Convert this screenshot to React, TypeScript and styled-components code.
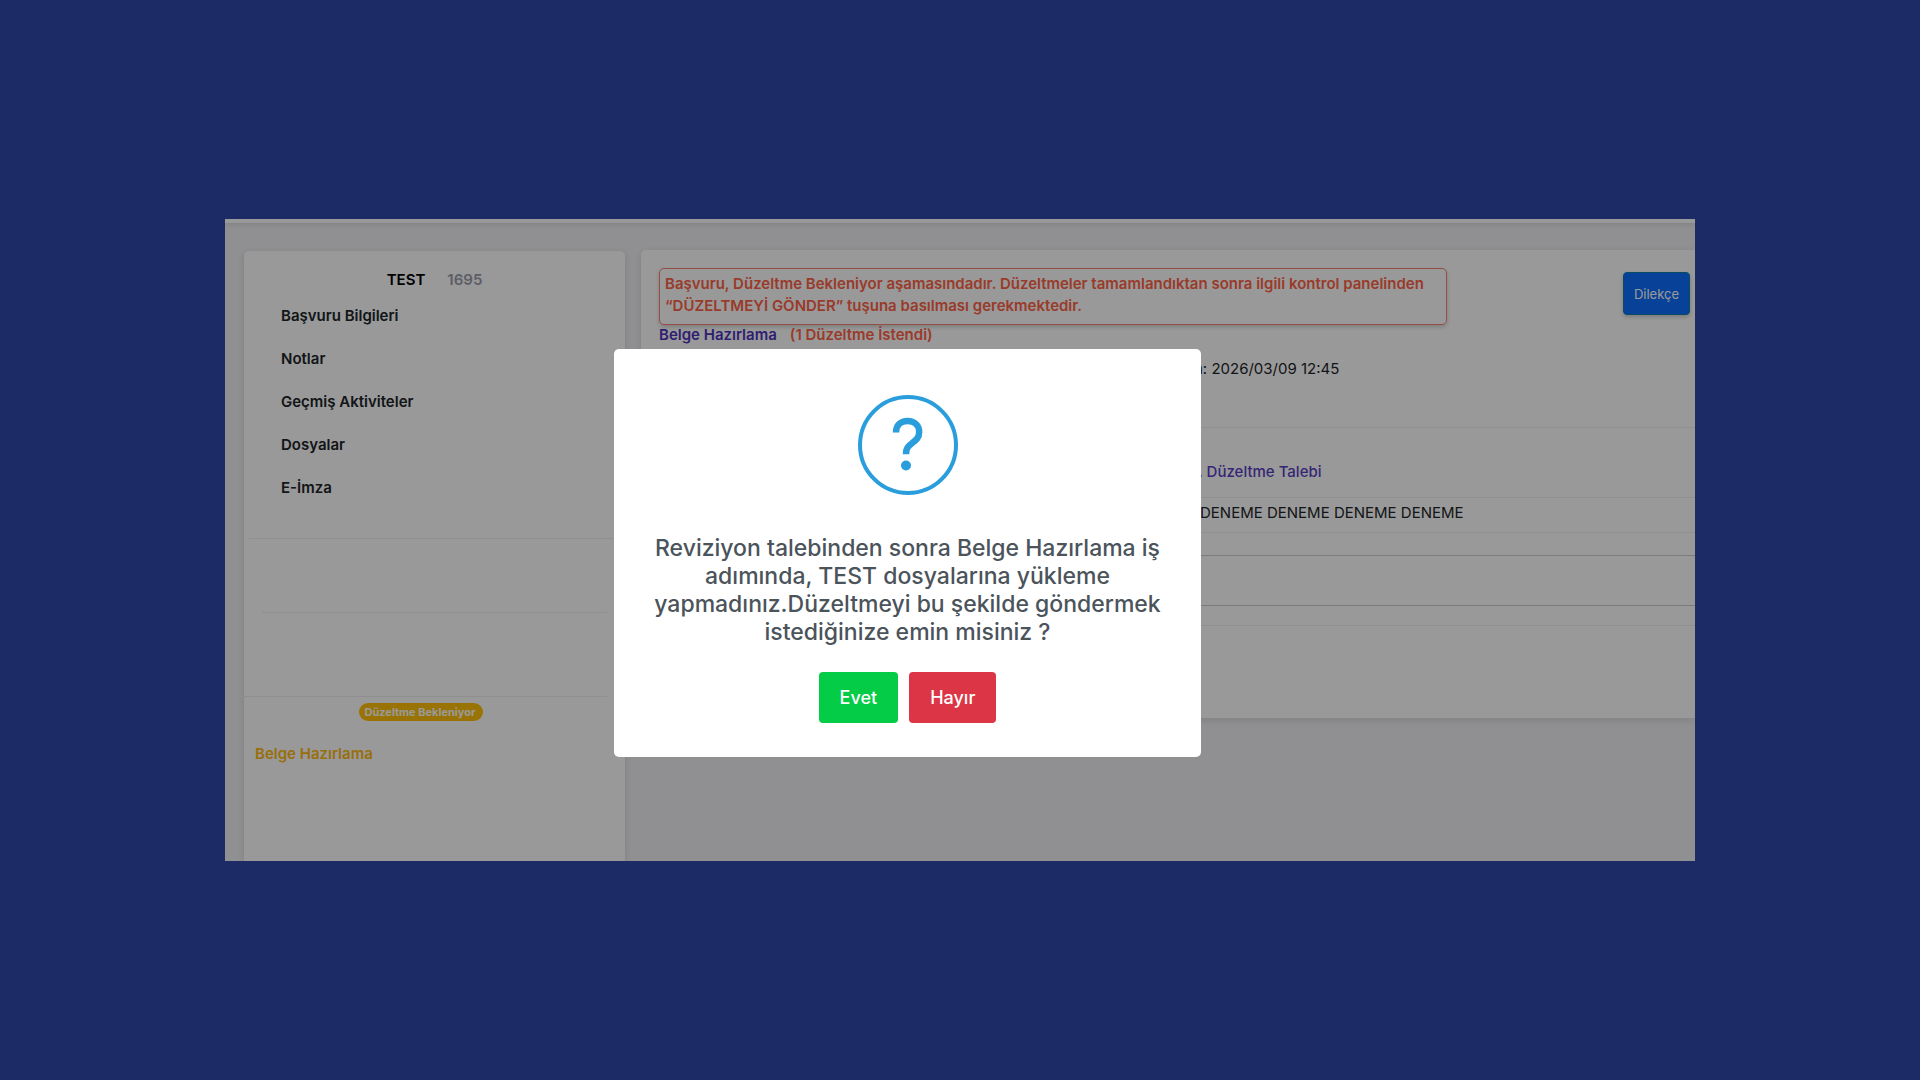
import React from "react";
import styled, { createGlobalStyle } from "styled-components";

const GlobalStyle = createGlobalStyle`
  *, *::before, *::after { box-sizing: border-box; }
  body {
    margin: 0;
    background: #1c2b66;
    font-family: Inter, "Liberation Sans", sans-serif;
    font-size: 15px;
    line-height: 20px;
    color: #212529;
  }
  h1, h2, p, ul { margin: 0; padding: 0; font-size: inherit; }
`;

const Page = styled.div`
  min-height: 100vh;
  display: flex;
  flex-direction: column;
  justify-content: center;
  padding: 0 225px;
`;

const Screen = styled.div`
  position: relative;
  display: flex;
  flex-direction: column;
  overflow: hidden;
  background: #f1f1f4;
`;

const TopStrip = styled.header`
  height: 4px;
  background: #fff;
  box-shadow: 0 1px 6px rgba(0, 0, 0, 0.16);
`;

const Columns = styled.div`
  display: grid;
  grid-template-columns: 381px 1fr;
  gap: 16px;
  padding: 27px 0 0 19px;
`;

const Card = styled.div`
  background: #fff;
  border-radius: 5px 5px 0 0;
  box-shadow: 0 2px 8px rgba(20, 20, 50, 0.12);
`;

const Sidebar = styled(Card)`
  min-height: 610px;
  margin-top: 1px;
  padding-top: 19px;
`;

const SidebarTitle = styled.div`
  display: flex;
  justify-content: center;
  gap: 22px;
  font-weight: 600;
  color: #000;
`;

const FileNumber = styled.span`
  color: #9a9cab;
`;

const Menu = styled.ul`
  list-style: none;
  padding: 4px 0 29px 37px;
`;

const MenuItem = styled.li`
  height: 43px;
  display: flex;
  align-items: center;
`;

const MenuLink = styled.a`
  color: #212529;
  font-weight: 600;
  text-decoration: none;
`;

const Rule = styled.hr<{ $left: number; $right: number; $after: number }>`
  height: 1px;
  border: 0;
  background: #eeeeee;
  margin: 0 ${(p) => p.$right}px ${(p) => p.$after}px ${(p) => p.$left}px;
`;

const StatusRow = styled.div`
  display: flex;
  justify-content: center;
  padding-right: 27px;
`;

const Badge = styled.span`
  height: 18px;
  padding: 0 7px 0 5px;
  border-radius: 9px;
  background: #ffc107;
  color: #fff;
  font-size: 11px;
  line-height: 18px;
  font-weight: 700;
`;

const StepLink = styled.a`
  display: block;
  margin: 23px 0 0 11px;
  color: #fdb913;
  font-weight: 600;
  text-decoration: none;
`;

const Main = styled(Card)`
  align-self: start;
  padding: 18px 0 92px;
  border-radius: 5px 0 0 0;
`;

const MainHead = styled.div`
  display: flex;
  justify-content: space-between;
  align-items: flex-start;
  padding: 0 5px 0 18px;
`;

const Alert = styled.p`
  width: 788px;
  padding: 4px 5px 7px;
  border: 1px solid #fa8072;
  border-radius: 5px;
  box-shadow: 0 2px 4px rgba(0, 0, 0, 0.18);
  color: tomato;
  font-weight: 600;
  line-height: 22px;
`;

const PetitionButton = styled.button`
  height: 43px;
  margin-top: 4px;
  padding: 0 10px;
  border: 1px solid #0a7fb0;
  border-radius: 4px;
  background: #0d6efd;
  box-shadow: 0 2px 4px rgba(0, 0, 0, 0.2);
  color: #fff;
  font: 400 13px/20px Inter, "Liberation Sans", sans-serif;
`;

const StepHeading = styled.h1`
  display: flex;
  gap: 13px;
  padding-left: 18px;
  color: #4f35bd;
  font-weight: 600;
`;

const RevisionCount = styled.span`
  color: tomato;
`;

const DateLine = styled.p`
  padding: 14px 0 48px 553px;
`;

const RevisionTitle = styled.h2`
  padding: 34px 0 15px 551px;
  color: #5b3fc4;
  font-weight: 500;
`;

const RevisionText = styled.p`
  padding: 5px 0 9px 559px;
`;

const NoteField = styled.textarea`
  display: block;
  width: 100%;
  height: 51px;
  margin: 0 0 19px 18px;
  border: 1px solid #cfcfcf;
  background: #fff;
  resize: none;
`;

const Overlay = styled.div`
  position: absolute;
  inset: 0;
  display: flex;
  align-items: flex-start;
  padding: 130px 0 0 389px;
  background: rgba(0, 0, 0, 0.4);
`;

const Dialog = styled.div`
  width: 587px;
  display: flex;
  flex-direction: column;
  align-items: center;
  padding: 46px 32px 34px;
  border-radius: 5px;
  background: #fff;
`;

const DialogText = styled.p`
  margin: 39px 0 26px;
  color: #4b535b;
  font-size: 23px;
  line-height: 28px;
  font-weight: 500;
  text-align: center;
`;

const DialogActions = styled.div`
  display: flex;
  gap: 11px;
`;

const DialogButton = styled.button<{ $color: string }>`
  height: 51px;
  padding: 0 21px;
  border: 0;
  border-radius: 4px;
  background: ${(p) => p.$color};
  color: #fff;
  font: 500 18px/24px Inter, "Liberation Sans", sans-serif;
`;

const menu = ["Başvuru Bilgileri", "Notlar", "Geçmiş Aktiviteler", "Dosyalar", "E-İmza"];

function QuestionIcon() {
  return (
    <svg width="100" height="100" viewBox="0 0 100 100" fill="none" aria-hidden="true">
      <circle cx="50" cy="50" r="48" stroke="#2a9ddd" strokeWidth="4" />
      <path
        d="M38 37.5C38 30 43 26 49.5 26C56.500 26 61.200 30.500 61.200 37C61.200 43 57.500 45.500 54 48.200C50 51.200 48 53.500 48 59.200"
        stroke="#2a9ddd"
        strokeWidth="6.500"
      />
      <circle cx="48" cy="70.500" r="5" fill="#2a9ddd" />
    </svg>
  );
}

export default function App() {
  return (
    <Page>
      <GlobalStyle />
      <Screen>
        <TopStrip />
        <Columns>
          <Sidebar as="aside">
            <SidebarTitle>
              <span>TEST</span>
              <FileNumber>1695</FileNumber>
            </SidebarTitle>
            <Menu>
              {menu.map((label) => (
                <MenuItem key={label}>
                  <MenuLink href="#">{label}</MenuLink>
                </MenuItem>
              ))}
            </Menu>
            <Rule $left={5} $right={5} $after={73} />
            <Rule $left={18} $right={18} $after={83} />
            <Rule $left={-9} $right={18} $after={6} />
            <StatusRow>
              <Badge>Düzeltme Bekleniyor</Badge>
            </StatusRow>
            <StepLink href="#">Belge Hazırlama</StepLink>
          </Sidebar>
          <Main as="main">
            <MainHead>
              <Alert>
                Başvuru, Düzeltme Bekleniyor aşamasındadır. Düzeltmeler tamamlandıktan sonra ilgili kontrol panelinden
                “DÜZELTMEYİ GÖNDER” tuşuna basılması gerekmektedir.
              </Alert>
              <PetitionButton type="button">Dilekçe</PetitionButton>
            </MainHead>
            <StepHeading>
              Belge Hazırlama
              <RevisionCount>(1 Düzeltme İstendi)</RevisionCount>
            </StepHeading>
            <DateLine>n: 2026/03/09 12:45</DateLine>
            <Rule $left={18} $right={0} $after={0} />
            <RevisionTitle>1. Düzeltme Talebi</RevisionTitle>
            <Rule $left={18} $right={0} $after={0} />
            <RevisionText>DENEME DENEME DENEME DENEME</RevisionText>
            <Rule $left={18} $right={0} $after={22} />
            <NoteField aria-label="Düzeltme notu" />
            <Rule $left={18} $right={0} $after={0} />
          </Main>
        </Columns>
        <Overlay>
          <Dialog role="dialog" aria-modal="true" aria-labelledby="dialog-text">
            <QuestionIcon />
            <DialogText id="dialog-text">
              Reviziyon talebinden sonra Belge Hazırlama iş adımında, TEST dosyalarına yükleme yapmadınız.Düzeltmeyi bu
              şekilde göndermek istediğinize emin misiniz ?
            </DialogText>
            <DialogActions>
              <DialogButton type="button" $color="#04cc46">Evet</DialogButton>
              <DialogButton type="button" $color="#dc3545">Hayır</DialogButton>
            </DialogActions>
          </Dialog>
        </Overlay>
      </Screen>
    </Page>
  );
}
